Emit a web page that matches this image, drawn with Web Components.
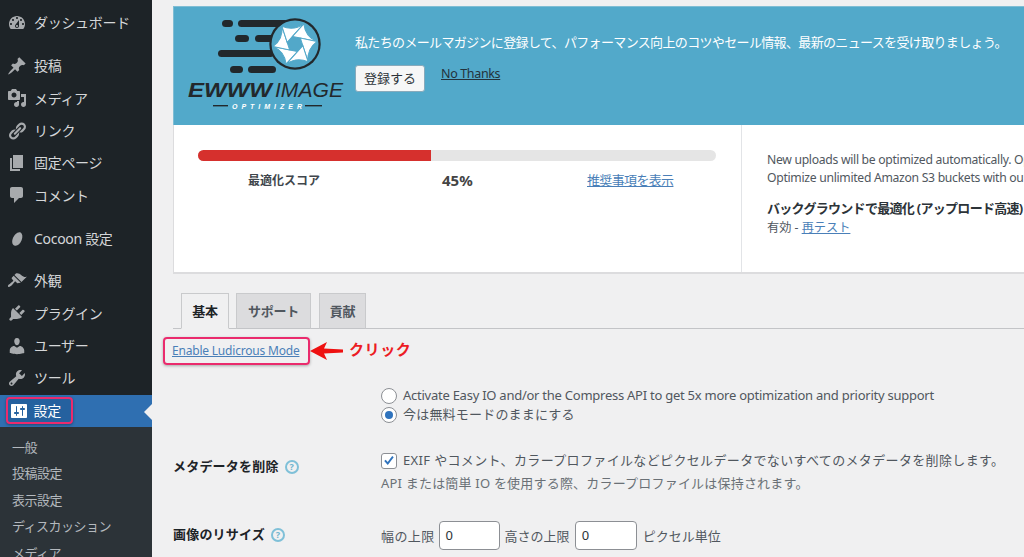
<!DOCTYPE html>
<html lang="ja"><head><meta charset="utf-8"><title>EWWW</title>
<style>
html,body{margin:0;height:557px;overflow:hidden;background:#f0f0f1}
body{display:flex;font:13px/1.4 "Noto Sans","Noto Sans CJK JP",sans-serif;color:#3c434a}
</style></head><body>
<wp-sidebar></wp-sidebar>
<main-area></main-area>
<script>
const FONT='"Noto Sans","Noto Sans CJK JP",sans-serif';
const ICONS={
dash:'M3.76 16h12.48c1.1-1.37 1.76-3.11 1.76-5 0-4.42-3.58-8-8-8s-8 3.58-8 8c0 1.89.66 3.63 1.76 5zM10 4c.55 0 1 .45 1 1s-.45 1-1 1-1-.45-1-1 .45-1 1-1zM6 6c.55 0 1 .45 1 1s-.45 1-1 1-1-.45-1-1 .45-1 1-1zm8 0c.55 0 1 .45 1 1s-.45 1-1 1-1-.45-1-1 .45-1 1-1zm-5.37 5.55L12 7v6c0 1.1-.9 2-2 2s-2-.9-2-2c0-.57.24-1.08.63-1.45zM4 10c.55 0 1 .45 1 1s-.45 1-1 1-1-.45-1-1 .45-1 1-1zm12 0c.55 0 1 .45 1 1s-.45 1-1 1-1-.45-1-1 .45-1 1-1zm-5 3c0-.55-.45-1-1-1s-1 .45-1 1 .45 1 1 1 1-.45 1-1z',
post:'M10.44 3.02l1.82-1.82 6.36 6.35-1.83 1.82c-1.05-.68-2.48-.57-3.41.36l-.75.75c-.92.93-1.04 2.35-.35 3.41l-1.83 1.82-2.41-2.41-2.8 2.79c-.42.42-3.38 2.71-3.8 2.29s1.86-3.39 2.28-3.81l2.79-2.79L4.1 9.36l1.83-1.82c1.05.69 2.48.57 3.4-.36l.75-.75c.93-.92 1.05-2.35.36-3.41z',
media:'M13 11V4c0-.55-.45-1-1-1h-1.67L9 1H5L3.67 3H2c-.55 0-1 .45-1 1v7c0 .55.45 1 1 1h10c.55 0 1-.45 1-1zM7 4.5c1.38 0 2.5 1.12 2.5 2.5S8.38 9.5 7 9.5 4.5 8.38 4.5 7 5.62 4.5 7 4.5zM14 6h5v10.5c0 1.38-1.12 2.5-2.5 2.5S14 17.88 14 16.5s1.12-2.5 2.5-2.5c.17 0 .34.02.5.05V9h-3V6zm-4 8.05V13h2v3.5c0 1.38-1.12 2.5-2.5 2.5S7 17.88 7 16.5 8.12 14 9.5 14c.17 0 .34.02.5.05z',
links:'M17.74 2.76c1.68 1.69 1.68 4.41 0 6.1l-1.53 1.52c-1.12 1.12-2.7 1.47-4.14 1.09l2.62-2.61.76-.77.76-.76c.84-.84.84-2.2 0-3.04-.84-.85-2.2-.85-3.04 0l-.77.76-3.38 3.38c-.37-1.44-.02-3.02 1.1-4.14l1.52-1.53c1.69-1.68 4.42-1.68 6.1 0zM8.59 13.43l5.34-5.34c.42-.42.42-1.1 0-1.52-.44-.43-1.13-.39-1.53 0l-5.33 5.34c-.42.42-.42 1.1 0 1.52.44.43 1.13.39 1.52 0zm-.76 2.29l4.14-4.15c.38 1.44.03 3.02-1.09 4.14l-1.52 1.53c-1.69 1.68-4.41 1.68-6.1 0-1.68-1.68-1.68-4.42 0-6.1l1.53-1.52c1.12-1.12 2.7-1.47 4.14-1.1l-4.14 4.15c-.85.84-.85 2.2 0 3.05.84.84 2.2.84 3.04 0z',
page:'M6 15V2h10v13H6zm-1 1h8v2H3V5h2v11z',
comment:'M5 2h9c1.1 0 2 .9 2 2v7c0 1.1-.9 2-2 2h-2l-5 5v-5H5c-1.1 0-2-.9-2-2V4c0-1.1.9-2 2-2z',
cocoon:'M13.6 3.4c1.9 1.2 2.4 4.4 1 7.9-1.4 3.6-4 5.8-6.5 5.4-2.6-.5-3.6-3.5-2.4-7 1.2-3.6 5-7.6 7.9-6.3z',
appearance:'M14.48 11.06L7.41 3.99l1.5-1.5c.5-.56 2.3-.47 3.51.32 1.21.8 1.43 1.28 2.91 2.1 1.18.64 2.45 1.26 4.45.85zm-.71.71L6.7 4.7 4.93 6.47c-.39.39-.39 1.02 0 1.41l1.06 1.06c.39.39.39 1.03 0 1.42-.6.6-1.43 1.11-2.21 1.69-.35.26-.7.53-1.01.84C1.43 13.23.4 14.91 1.2 15.7c.79.8 2.47-.23 3.83-1.59.31-.31.58-.66.85-1.02.57-.77 1.08-1.6 1.69-2.21.39-.39 1.02-.39 1.41 0l1.06 1.06c.39.39 1.02.39 1.41 0z',
plugins:'M13.11 4.36L9.87 7.6 8 5.73l3.24-3.24c.35-.34 1.05-.2 1.56.32.52.51.66 1.21.31 1.55zm-8 1.77l.91-1.12 9.01 9.01-1.19.84c-.71.71-2.63 1.16-3.82 1.16H6.14L4.9 17.26c-.59.59-1.54.59-2.12 0-.59-.58-.59-1.53 0-2.12l1.24-1.24v-3.88c0-1.13.4-3.19 1.09-3.89zm7.26 3.97l3.24-3.24c.34-.35 1.04-.21 1.55.31.52.51.66 1.21.31 1.55l-3.24 3.25z',
users:'M10 9.25c-2.27 0-2.73-3.44-2.73-3.44C7 4.02 7.82 2 9.97 2c2.16 0 2.98 2.02 2.71 3.81 0 0-.41 3.44-2.68 3.44zm0 2.57L12.72 10c2.39 0 4.52 2.33 4.52 4.53v2.49s-3.65 1.13-7.24 1.13c-3.65 0-7.24-1.13-7.24-1.13v-2.49c0-2.25 1.94-4.48 4.47-4.48z',
tools:'M16.68 9.77c-1.34 1.34-3.3 1.67-4.95.99l-5.41 6.52c-.99.99-2.59.99-3.58 0s-.99-2.59 0-3.57l6.52-5.42c-.68-1.65-.35-3.61.99-4.95 1.28-1.28 3.12-1.62 4.72-1.06l-2.89 2.89 2.82 2.82 2.86-2.87c.53 1.58.18 3.39-1.08 4.65zM3.81 16.21c.4.39 1.04.39 1.43 0 .4-.4.4-1.04 0-1.43-.39-.4-1.03-.4-1.43 0-.39.39-.39 1.03 0 1.43z',
settings:'M18 16V4c0-.55-.45-1-1-1H3c-.55 0-1 .45-1 1v12c0 .55.45 1 1 1h14c.55 0 1-.45 1-1zM8 11h1c.55 0 1 .45 1 1s-.45 1-1 1H8v1.5c0 .28-.22.5-.5.5s-.5-.22-.5-.5V13H6c-.55 0-1-.45-1-1s.45-1 1-1h1V5.5c0-.28.22-.5.5-.5s.5.22.5.5V11zm5-2h-1c-.55 0-1-.45-1-1s.45-1 1-1h1V5.5c0-.28.22-.5.5-.5s.5.22.5.5V7h1c.55 0 1 .45 1 1s-.45 1-1 1h-1v5.5c0 .28-.22.5-.5.5s-.5-.22-.5-.5V9z'
};
function def(name,html){
  customElements.define(name,class extends HTMLElement{
    connectedCallback(){ if(!this.shadowRoot){ this.attachShadow({mode:'open'}).innerHTML=typeof html==='function'?html(this):html; } }
  });
}
const BLADES=[0,60,120,180,240,300].map(a=>`<path transform="rotate(${a})" d="M4 6.93L-4 6.93L-20.88 6.93A22 22 0 0 1 -4.44 21.55Z"/>`).join('');
def('menu-item',el=>`<style>
:host{display:flex;align-items:center;height:${el.getAttribute('h')||32.35}px;color:#d5d7d9;position:relative;font-size:14px;letter-spacing:-.3px}
:host([current]){background:#2f6fb1;color:#fff}
svg{width:20px;height:20px;margin:0 7px;fill:#a7aaad;flex:none}
:host([current]) svg{fill:#fff}
.hl{display:flex;align-items:center;height:27px;box-sizing:border-box;width:67px;margin-left:6px;border:2.5px solid #ea2b6d;border-radius:4px;background:#25619f;box-shadow:0 1px 3px rgba(0,0,0,.35)}
.hl svg{margin:0 5px 0 .5px}
.arrow{position:absolute;right:0;top:9px;border:8px solid transparent;border-right-color:#f0f0f1;border-left:0}
</style>${el.hasAttribute('current')
?`<div class="hl"><svg viewBox="0 0 20 20"><path d="${ICONS[el.getAttribute('icon')]}"/></svg><span><slot></slot></span></div><i class="arrow"></i>`
:`<svg viewBox="0 0 20 20"><path d="${ICONS[el.getAttribute('icon')]}"/></svg><span><slot></slot></span>`}`);
def('sub-item',`<style>:host{display:block;height:26.5px;line-height:26.5px;padding-left:12px;color:#b4b9be;font-size:13px;letter-spacing:-.5px;white-space:nowrap}</style><slot></slot>`);
def('wp-sidebar',`<style>
:host{display:block;width:152px;flex:none;height:557px;background:#1d2327;overflow:hidden;font-family:${FONT}}
.g{padding-top:7px}.sep{height:10.500px}
.sub{background:#2c3338;padding-top:7px;height:200px}
</style>
<div class="g"><menu-item icon="dash">ダッシュボード</menu-item></div><div class="sep"></div>
<menu-item icon="post">投稿</menu-item><menu-item icon="media">メディア</menu-item><menu-item icon="links">リンク</menu-item><menu-item icon="page">固定ページ</menu-item><menu-item icon="comment">コメント</menu-item>
<div class="sep" style="height:11px"></div><menu-item icon="cocoon">Cocoon 設定</menu-item><div class="sep" style="height:10px"></div>
<menu-item icon="appearance">外観</menu-item><menu-item icon="plugins">プラグイン</menu-item><menu-item icon="users">ユーザー</menu-item><menu-item icon="tools">ツール</menu-item>
<div class="sep" style="height:.5px"></div><menu-item icon="settings" current h="32">設定</menu-item>
<div class="sub"><sub-item>一般</sub-item><sub-item>投稿設定</sub-item><sub-item>表示設定</sub-item><sub-item>ディスカッション</sub-item><sub-item>メディア</sub-item></div>`);
def('ewww-logo',`<style>:host{display:block;width:176px;height:105px;flex:none}svg{display:block}text{font-family:"Liberation Sans",sans-serif}</style>
<svg width="176" height="105" viewBox="188 8 176 105">
<g fill="#22282c"><rect x="222" y="21" width="11" height="7" rx="3.5"/><rect x="238" y="21" width="50" height="7" rx="3.5"/>
<rect x="235" y="36" width="14" height="7" rx="3.5"/><rect x="255" y="36" width="20" height="7" rx="3.5"/>
<rect x="218" y="51" width="56" height="7" rx="3.5"/><rect x="230" y="67" width="13" height="7" rx="3.5"/><rect x="248" y="67" width="28" height="7" rx="3.5"/>
<circle cx="295" cy="45" r="25.700"/></g>
<circle cx="295" cy="45" r="23.500" fill="#52a8c9"/>
<g transform="translate(295 45) rotate(12)" fill="#fff" stroke="#52a8c9" stroke-width="1">${BLADES}</g>
<text x="188" y="98" font-size="20.500" font-weight="700" font-style="italic" fill="#22282c" textLength="84" lengthAdjust="spacingAndGlyphs">EWWW</text>
<text x="275" y="98" font-size="20.500" font-style="italic" fill="#22282c" textLength="68" lengthAdjust="spacingAndGlyphs">IMAGE</text>
<text x="232" y="110" font-size="7" font-weight="700" font-style="italic" fill="#fff" textLength="70">OPTIMIZER</text>
<rect x="213" y="106" width="15" height="1.400" fill="#22282c"/><rect x="305" y="106" width="17" height="1.400" fill="#22282c"/>
</svg>`);
def('wp-button',`<style>:host{display:inline-flex;align-items:center;justify-content:center;box-sizing:border-box;width:70px;height:27px;background:#f6f7f7;border:1px solid #88aabb;border-radius:3px;color:#2c3338;font-size:13px}</style><slot></slot>`);
def('ewww-banner',`<style>
:host{display:flex;height:119px;box-sizing:border-box;background:#52a9ca;color:#fff;border:1px solid #7fbdd4;border-bottom:0}
.r{margin-left:-9px;padding-top:24px;white-space:nowrap;font-size:13px;letter-spacing:-.65px}
.p{height:22px;line-height:22px}
.act{display:flex;margin-top:12px;align-items:flex-start}
.act a{margin:-1px 0 0 16px;color:#23323c;text-decoration:underline;font-size:12.500px;letter-spacing:-.35px;line-height:19px}
wp-button{letter-spacing:0}
ewww-logo{margin-left:14px}
</style><ewww-logo></ewww-logo><div class="r"><div class="p">私たちのメールマガジンに登録して、パフォーマンス向上のコツやセール情報、最新のニュースを受け取りましょう。</div>
<div class="act"><wp-button>登録する</wp-button><a>No Thanks</a></div></div>`);
def('ewww-stats',`<style>
:host{display:flex;height:149px;box-sizing:border-box;background:#fff;border:1px solid #dcdcde;border-top:0;border-bottom-width:2px;font-size:13px;white-space:nowrap}
.l{width:568px;box-sizing:border-box;padding:25px 24px 0 24px;border-right:1px solid #e2e4e7;flex:none}
.bar{height:11px;background:#e5e5e5;border-radius:6px;overflow:hidden;width:518px}
.bar i{display:block;height:100%;width:233px;background:#d6302d}
.row{display:grid;grid-template-columns:244px 145px 1fr;margin-top:9px;line-height:20px}
.row b{font-weight:700;font-size:12px;color:#40464c;padding:1px 0 0 50px}
.row .s{font-size:15px;font-weight:700;color:#444}
.row a{color:#4a7fb8;text-decoration:underline;font-size:13px;letter-spacing:-.65px}
.r{padding:26px 0 0 25px;color:#50575e;font-size:12.200px;letter-spacing:-.3px;line-height:18px}
.r b{display:block;margin-top:12px;color:#2c3338;font-size:13px;letter-spacing:-.7px}
.r .v{margin-top:2px;letter-spacing:0}
.r a{color:#4a7fb8;text-decoration:underline}
</style><div class="l"><div class="bar"><i></i></div><div class="row"><b>最適化スコア</b><span class="s">45%</span><a>推奨事項を表示</a></div></div>
<div class="r"><div>New uploads will be optimized automatically. Optimize everything</div><div>Optimize unlimited Amazon S3 buckets with our premium</div><b>バックグラウンドで最適化 (アップロード高速)</b><div class="v">有効 - <a>再テスト</a></div></div>`);
def('ewww-tabs',`<style>
:host{display:flex;gap:7px;padding-left:8px;height:36px;box-sizing:border-box;border-bottom:1px solid #c3c4c7;font-size:13px;font-weight:700}
.t{box-sizing:border-box;height:36px;border:1px solid #c9cacc;border-bottom:1px solid #c3c4c7;background:#dcdcde;display:flex;align-items:center;justify-content:center;color:#50575e;letter-spacing:-.2px}
.a{background:#f0f0f1;color:#1d2327;border-bottom-color:#f0f0f1}
</style><div class="t a" style="width:48px">基本</div><div class="t" style="width:75px">サポート</div><div class="t" style="width:47px;margin-left:1px">貢献</div>`);
def('ludicrous-link',`<style>
:host{display:flex;align-items:center;margin:9px 0 0 -10px;height:28px;font-size:13px}
.box{box-sizing:border-box;width:147px;height:28px;border:2.500px solid #ea2b6d;border-radius:4px;box-shadow:0 1px 3px rgba(0,0,0,.3);padding-left:7px;line-height:23px;color:#4a7fb8;text-decoration:underline;white-space:nowrap;font-size:12px;letter-spacing:-.2px}
svg{margin-left:0;flex:none}
b{margin:0 0 3px 6px;color:#ec1c24;font-size:15px;letter-spacing:.6px}
</style><div class="box">Enable Ludicrous Mode</div><svg width="33" height="18" viewBox="0 0 33 18"><path d="M0 9L17 0 14 6.500 33 7.500V10.500L14 11.500 17 18z" fill="#ee1111"/></svg><b>クリック</b>`);
def('q-help',`<style>:host{display:inline-block;width:14px;height:14px;box-sizing:border-box;border:2px solid #7fc0d8;border-radius:50%;color:#6fb4ce;font:700 9px/10px "Noto Sans",sans-serif;text-align:center;vertical-align:1px;margin-left:6px;letter-spacing:0}</style>?`);
def('wp-radio',el=>`<style>:host{display:inline-block;width:16px;height:16px;box-sizing:border-box;border:1px solid #8c8f94;border-radius:50%;background:#fff;flex:none}
i{display:${el.hasAttribute('checked')?'block':'none'};width:8px;height:8px;border-radius:50%;background:#2f73bd;margin:3px}</style><i></i>`);
def('wp-check',`<style>:host{display:inline-block;width:16px;height:16px;box-sizing:border-box;border:1px solid #8c8f94;border-radius:3px;background:#fff;flex:none}svg{display:block;margin:-1px}</style><svg width="16" height="16" viewBox="0 0 16 16"><path d="M3.200 8l1.500-1.300 2 2.300 4.500-6 1.500 1.200-5.900 7.800z" fill="#2f73bd"/></svg>`);
def('num-input',`<style>:host{display:inline-block;box-sizing:border-box;width:62px;height:29px;border:1px solid #8c8f94;border-radius:4px;background:#fff;padding-left:6px;line-height:27px;color:#2c3338;font-size:13px}</style>0`);
def('main-area',`<style>
:host{display:block;flex:1;min-width:0;overflow:hidden;padding:6px 0 0 21px;color:#50575e;font-family:${FONT};font-size:13px}
.w{width:900px}
ewww-tabs{margin-top:19px}
ludicrous-link{margin-top:8px}
.opts{margin:22px 0 0 208px;display:flex;flex-direction:column;gap:2px;letter-spacing:-.25px}
.o{display:flex;align-items:center;gap:6px;height:17px;white-space:nowrap;font-size:13px}
.grid{display:grid;grid-template-columns:208px 1fr}
.lab{font-weight:700;color:#1d2327;white-space:nowrap;font-size:13px;letter-spacing:.2px}
.m1{margin-top:29px}.m2{margin-top:33px}
.c{letter-spacing:.35px;white-space:nowrap}
.d{margin-top:5px;color:#6a7076;letter-spacing:.2px}
.size{display:flex;align-items:center;white-space:nowrap;margin-top:-4px}
</style><div class="w"><ewww-banner></ewww-banner><ewww-stats></ewww-stats><ewww-tabs></ewww-tabs>
<ludicrous-link></ludicrous-link>
<div class="opts"><div class="o"><wp-radio></wp-radio>Activate Easy IO and/or the Compress API to get 5x more optimization and priority support</div><div class="o"><wp-radio checked></wp-radio><span style="letter-spacing:.2px">今は無料モードのままにする</span></div></div>
<div class="grid m1"><div class="lab" style="padding-top:5px">メタデータを削除<q-help></q-help></div><div><div class="o c"><wp-check></wp-check>EXIF やコメント、カラープロファイルなどピクセルデータでないすべてのメタデータを削除します。</div><div class="d">API または簡単 IO を使用する際、カラープロファイルは保持されます。</div></div></div>
<div class="grid m2"><div class="lab">画像のリサイズ<q-help></q-help></div><div class="size"><span style="letter-spacing:.4px">幅の上限</span><num-input style="margin:0 5px 0 4px;width:61px"></num-input><span>高さの上限</span><num-input style="margin:0 6px 0 5px"></num-input><span>ピクセル単位</span></div></div>
</div>`);
</script></body></html>
